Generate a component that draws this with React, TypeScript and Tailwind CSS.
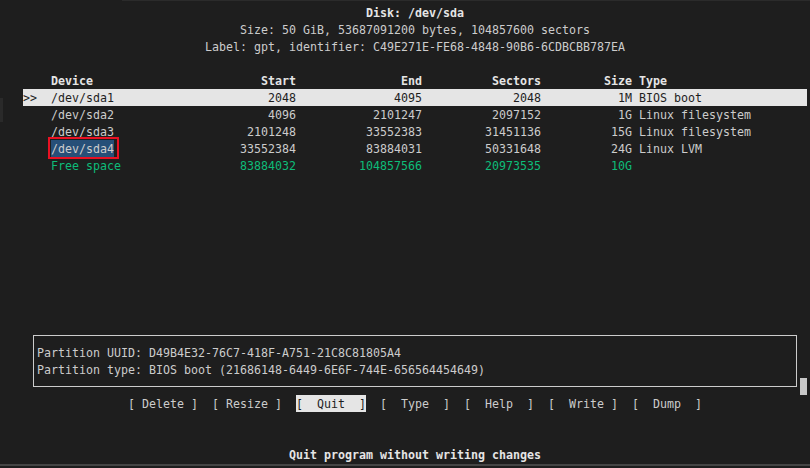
import React from "react";

const COLS = 112;

function place(parts: [number, string, ("l" | "r")?][]): string {
  const arr = new Array(COLS).fill(" ");
  for (const [col, text, align] of parts) {
    const start = align === "r" ? col - text.length + 1 : col;
    for (let i = 0; i < text.length; i++) arr[start + i] = text[i];
  }
  return arr.join("").replace(/\s+$/, "");
}

function rowString(prefix: string, dev: string, start: string, end: string, sectors: string, size: string, type: string) {
  return place([
    [0, prefix],
    [4, dev],
    [38, start, "r"],
    [56, end, "r"],
    [73, sectors, "r"],
    [86, size, "r"],
    [88, type],
  ]);
}

const Line = ({ children, className = "" }: { children?: React.ReactNode; className?: string }) => (
  <div className={"h-[17px] leading-[18px] whitespace-pre " + className}>{children}</div>
);

export default function App() {
  const header = rowString("", "Device", "Start", "End", "Sectors", "Size", "Type");
  const r1 = rowString(">>", "/dev/sda1", "2048", "4095", "2048", "1M", "BIOS boot");
  const r2 = rowString("", "/dev/sda2", "4096", "2101247", "2097152", "1G", "Linux filesystem");
  const r3 = rowString("", "/dev/sda3", "2101248", "33552383", "31451136", "15G", "Linux filesystem");
  const r4 = rowString("", "/dev/sda4", "33552384", "83884031", "50331648", "24G", "Linux LVM");
  const r5 = rowString("", "Free space", "83884032", "104857566", "20973535", "10G", "");
  const r4rest = r4.slice(13);

  return (
    <div
      className="relative w-[810px] h-[468px] overflow-hidden bg-[#1e1e1e] text-[#cccccc] text-[11.63px]"
      style={{ fontFamily: '"DejaVu Sans Mono", monospace' }}
    >
      <div className="absolute left-[122px] right-0 top-0 h-px bg-[#2b2b2b]" />
      <div className="absolute left-0 top-[98px] w-[3px] h-[24px] bg-[#2a2a2a]" />
      <div className="absolute left-0 right-0 top-[464px] h-[2px] bg-[#454545]" />
      <div className="absolute left-[800px] top-[378px] w-[7px] h-[17px] bg-[#c8c8c8]" />

      <div className="pl-[23px] pt-[4px] w-[807px]">
        <Line className="font-bold text-[#e5e5e5]">{place([[49, "Disk: /dev/sda"]])}</Line>
        <Line>{place([[31, "Size: 50 GiB, 53687091200 bytes, 104857600 sectors"]])}</Line>
        <Line>{place([[26, "Label: gpt, identifier: C49E271E-FE68-4848-90B6-6CDBCBB787EA"]])}</Line>
        <Line />
        <Line className="font-bold text-[#e5e5e5]">{header}</Line>
        <Line className="bg-[#e5e5e5] text-[#1e1e1e]">{r1}</Line>
        <Line>{r2}</Line>
        <Line>{r3}</Line>
        <Line>
          {"    "}
          <span className="relative inline-block h-[17px] bg-[#264f78]">
            /dev/sda4
            <span className="absolute left-[-3px] right-[-5px] top-[-3px] bottom-[-2px] border-2 border-[#e81123]" />
          </span>
          {r4rest}
        </Line>
        <Line className="text-[#0dbc79]">{r5}</Line>
        {Array.from({ length: 9 }).map((_, i) => (
          <Line key={i} />
        ))}
        <div className="mt-[8px] ml-[10px] w-[764px] h-[52px] border border-[#cccccc] pt-[8px] pl-[3px]">
          <Line>Partition UUID: D49B4E32-76C7-418F-A751-21C8C81805A4</Line>
          <Line>Partition type: BIOS boot (21686148-6449-6E6F-744E-656564454649)</Line>
        </div>
        <Line className="mt-[8px]">
          {place([[15, "[ Delete ]"], [27, "[ Resize ]"]]) + "  "}
          <span className="inline-block h-[17px] bg-[#e5e5e5] text-[#1e1e1e]">{"[  Quit  ]"}</span>
          {"  [  Type  ]  [  Help  ]  [  Write ]  [  Dump  ]"}
        </Line>
        <Line />
        <Line />
        <Line className="font-bold text-[#e5e5e5]">{place([[38, "Quit program without writing changes"]])}</Line>
      </div>
    </div>
  );
}
